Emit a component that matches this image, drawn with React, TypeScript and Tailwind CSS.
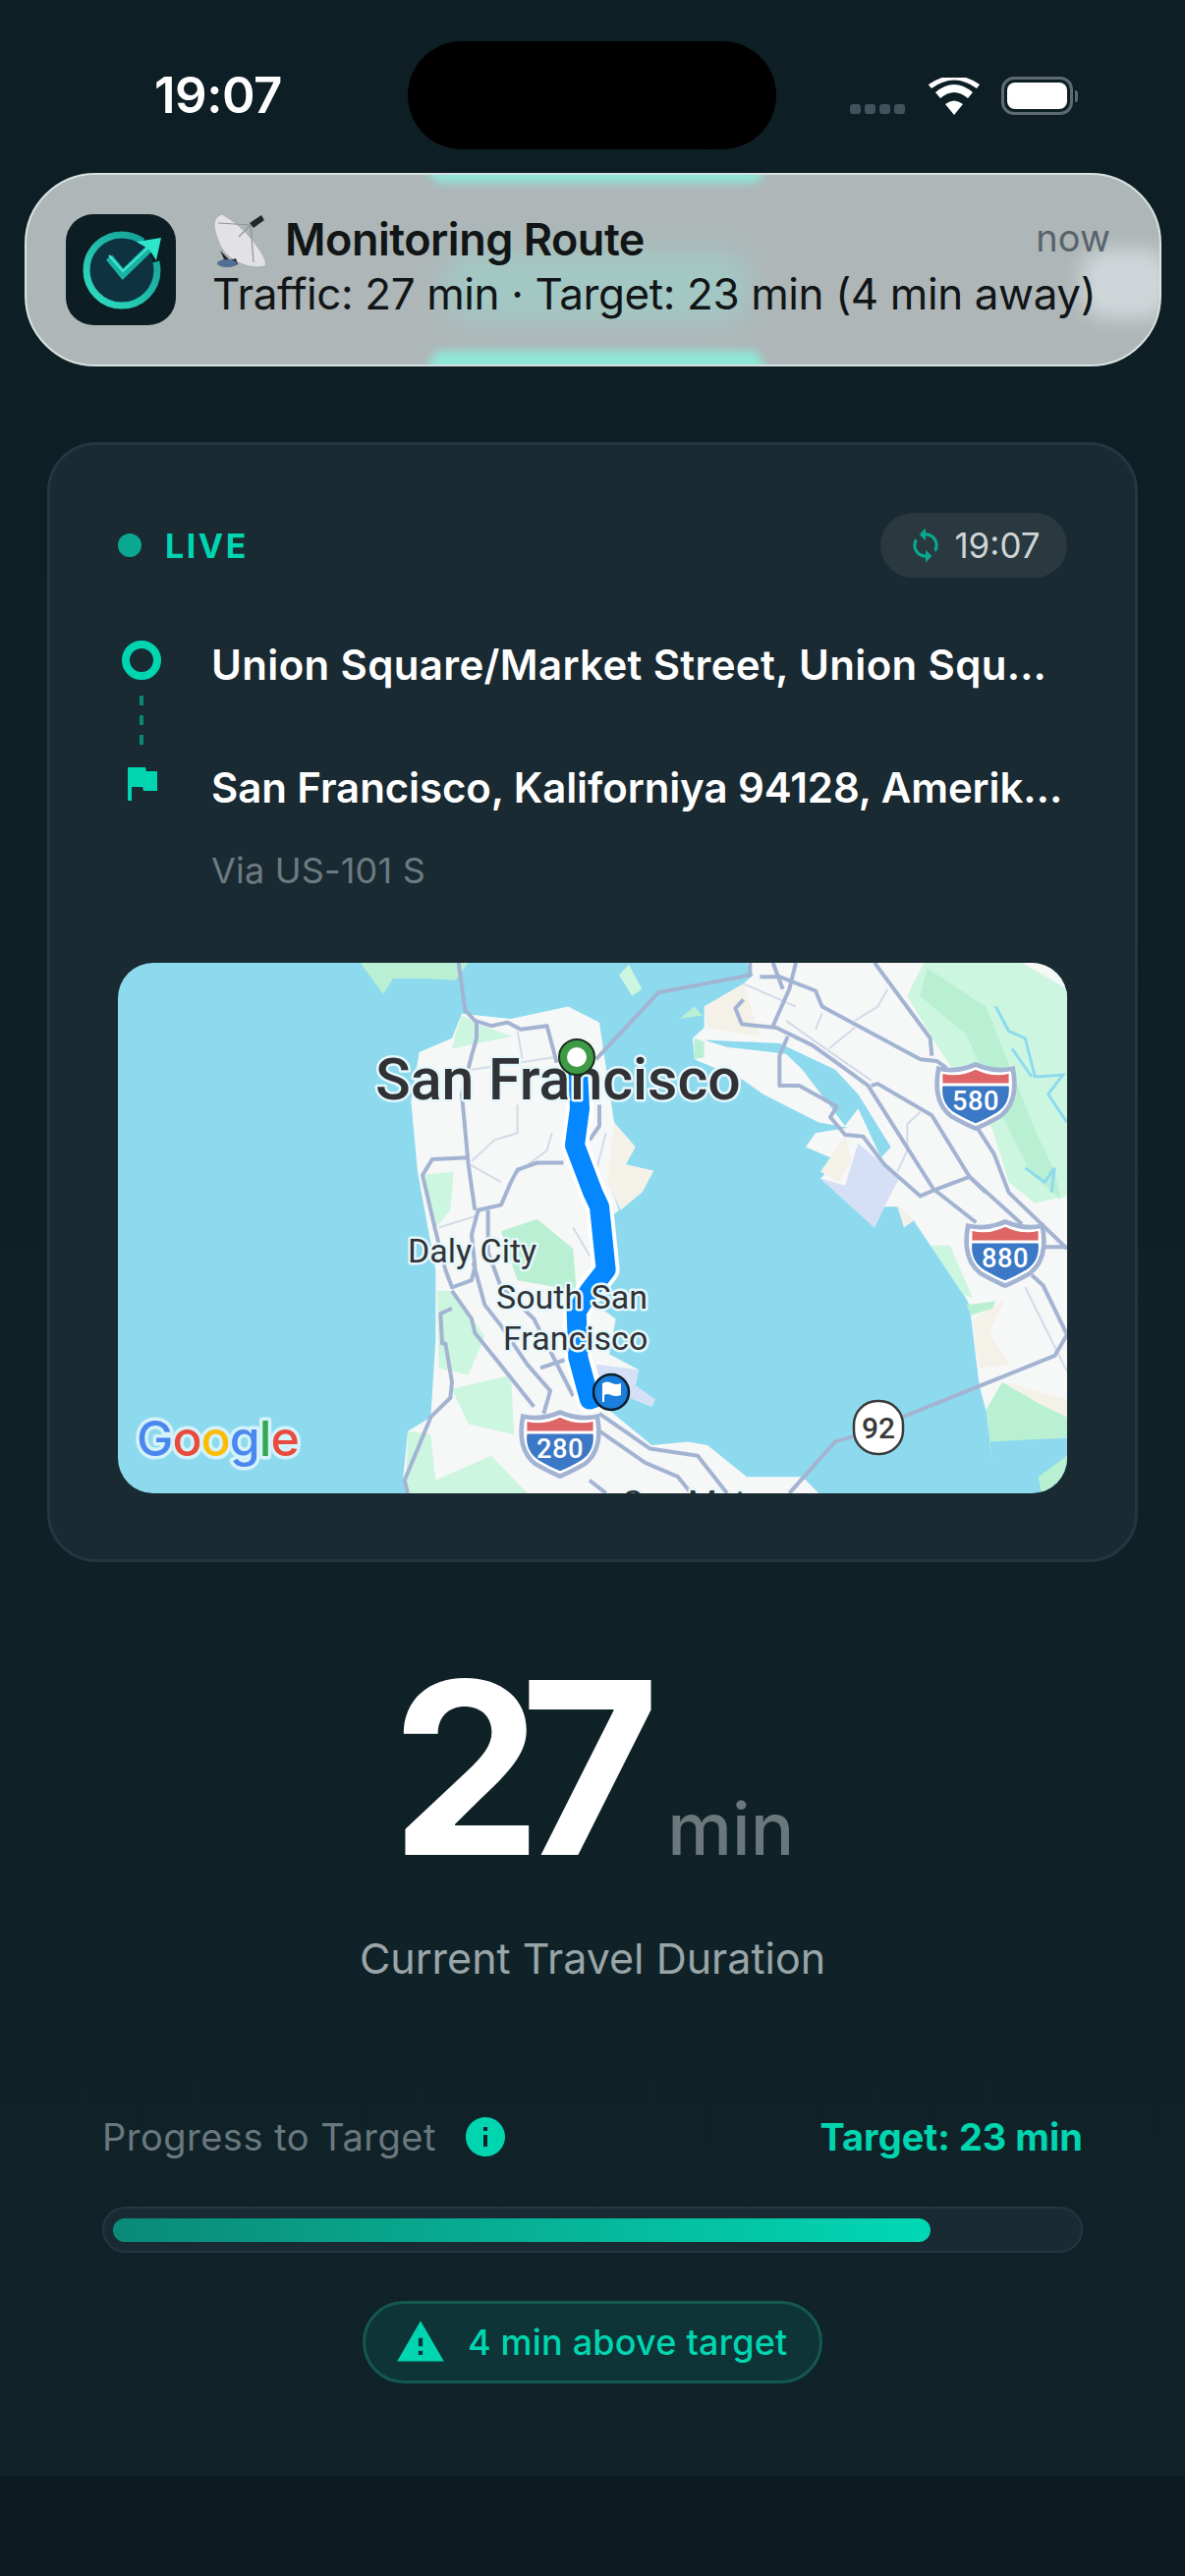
import React from 'react';
import { MdFlag, MdInfo, MdSync, MdWarning } from 'react-icons/md';

// map points are read off two crops of the map, left and right half
const L = (x: number, y: number) => `${110 + x / 3},${970 + y / 2.8}`;
const R = (x: number, y: number) => `${600 + x / 3},${970 + y / 2.8}`;
const left = (p: number[][]) => p.map(([x, y]) => L(x, y)).join(' ');
const right = (p: number[][]) => p.map(([x, y]) => R(x, y)).join(' ');

const WATER = '#8ddaee';
const LAND = '#f6f7f7';
const GREEN = '#b9f0d3';
const PALE = '#cdf6e0';
const TAN = '#f4f1e8';
const LAVENDER = '#d5dff5';
const ROAD = '#a3b4d3';
const MINOR = '#d3dbe8';

const westLand =
  left([[1080, 170], [1230, 185], [1405, 150], [1500, 195]]) + ' ' +
  right([[75, 480], [140, 550], [110, 600], [195, 618], [160, 680], [60, 650], [90, 730], [50, 760], [75, 900], [20, 1000], [80, 1040], [60, 1140], [150, 1185], [140, 1230], [200, 1270], [190, 1290], [110, 1260], [60, 1300], [190, 1400], [300, 1390], [360, 1400], [480, 1490], [650, 1490], [700, 1537]]) + ' ' +
  left([[910, 1537], [900, 1500], [915, 1360], [985, 1320], [1000, 1100], [1000, 900], [945, 620], [925, 420], [950, 280], [1050, 240]]);

const eastLand = right([[480, 25], [1458, 25], [1458, 1330], [1210, 1300], [1190, 1230], [1160, 1000], [1100, 900], [1040, 830], [990, 760], [940, 720], [900, 720], [870, 780], [705, 640], [760, 590], [660, 550], [690, 510], [790, 495], [700, 480], [530, 400], [470, 360], [320, 300], [315, 240], [350, 210], [350, 150], [470, 85], [500, 60]]);

const greens: [string, string][] = [
  [GREEN, left([[770, 25], [1100, 25], [1060, 75], [970, 70], [870, 70], [840, 115]])],
  [PALE, right([[90, 60], [120, 30], [160, 100], [130, 120]])],
  [PALE, left([[1080, 175], [1130, 200], [1235, 235], [1050, 270], [1060, 230]])],
  [PALE, left([[960, 630], [1055, 620], [1045, 730], [1000, 780]])],
  [GREEN, left([[1200, 790], [1310, 755], [1420, 840], [1430, 960], [1250, 930]])],
  [PALE, left([[1005, 960], [1050, 960], [1150, 1090], [1100, 1200], [1010, 1180]])],
  [PALE, left([[1050, 1240], [1230, 1200], [1240, 1370], [1100, 1340]])],
  [PALE, left([[915, 1360], [985, 1370], [1000, 1500], [1170, 1430], [1280, 1537], [910, 1537]])],
  [PALE, right([[1020, 25], [1320, 25], [1458, 100], [1458, 690], [1360, 710], [1280, 650], [1230, 500], [1060, 260], [970, 120]])],
  [GREEN, right([[1030, 40], [1210, 150], [1360, 500], [1420, 620], [1440, 700], [1350, 630], [1280, 500], [1150, 230], [1010, 120]])],
  [GREEN, right([[1150, 1000], [1240, 990], [1230, 1010], [1165, 1030]])],
  [PALE, right([[1040, 830], [1100, 830], [1170, 980], [1140, 970]])],
  [GREEN, right([[1210, 1300], [1260, 1220], [1370, 1280], [1458, 1320], [1458, 1380], [1320, 1385], [1220, 1390], [1230, 1450]])],
  [GREEN, right([[1370, 1490], [1458, 1430], [1458, 1537], [1380, 1537]])],
  [GREEN, right([[320, 240], [350, 250], [350, 295], [320, 300]])],
  [GREEN, right([[275, 185], [320, 150], [345, 175]])],
];

const tans: string[] = [
  right([[350, 150], [470, 85], [520, 235], [360, 210]]),
  right([[1170, 1040], [1270, 985], [1220, 1075], [1280, 1170], [1190, 1180]]),
  right([[1270, 1220], [1458, 1270], [1458, 1330], [1330, 1280]]),
  right([[75, 480], [140, 550], [110, 600], [195, 618], [160, 680], [95, 730], [55, 650]]),
  right([[780, 520], [800, 590], [760, 650], [705, 620]]),
  right([[940, 720], [990, 760], [960, 780]]),
];

const roads: string[] = [
  left([[1070, 25], [1090, 160], [1120, 190], [1170, 205], [1220, 195], [1260, 215], [1340, 205], [1370, 310]]),
  left([[1125, 195], [1125, 240], [1110, 290], [1080, 400], [1100, 600], [1120, 730]]),
  left([[1100, 580], [990, 585], [960, 630], [1000, 790], [1030, 900], [1050, 950], [1110, 930], [1120, 890], [1110, 800], [1130, 730], [1200, 715], [1230, 650], [1250, 615], [1310, 595], [1390, 595]]),
  left([[1160, 730], [1160, 850], [1200, 950], [1300, 1040], [1420, 1260]]),
  left([[1115, 880], [1150, 1000], [1200, 1060], [1280, 1170], [1350, 1245], [1330, 1310]]),
  left([[1050, 960], [1110, 1040], [1120, 1080], [1300, 1290]]),
  left([[1050, 1010], [1015, 1025], [1020, 1110], [1030, 1110], [1050, 1220], [1045, 1265], [985, 1320], [950, 1400], [905, 1500], [915, 1537]]),
  left([[1320, 1180], [1400, 1155]]),
  right([[20, 300], [210, 110], [490, 60], [490, 25]]),
  right([[520, 65], [580, 65], [690, 105], [710, 150], [1010, 300], [1060, 305], [1090, 325]]),
  right([[630, 25], [610, 100], [560, 205]]),
  right([[560, 25], [590, 100]]),
  right([[470, 130], [445, 155], [465, 200], [570, 210], [680, 260], [770, 320], [850, 375], [1050, 670], [1180, 765]]),
  right([[605, 235], [580, 290], [580, 375], [640, 375], [755, 435], [735, 465], [780, 515], [835, 520], [900, 600], [1010, 690], [1060, 670], [1160, 635], [1320, 770]]),
  right([[870, 25], [1040, 240], [1045, 290]]),
  right([[860, 375], [880, 370], [1045, 460], [1160, 635], [1210, 680]]),
  right([[1180, 490], [1235, 570], [1280, 680], [1458, 840]]),
  right([[1390, 835], [1458, 835]]),
  right([[1350, 915], [1385, 945], [1458, 1085], [1420, 1145], [955, 1320]]),
  right([[805, 1375], [750, 1390], [610, 1537]]),
  right([[30, 1310], [185, 1410], [330, 1430], [420, 1537]]),
  right([[0, 1340], [170, 1450], [270, 1490], [310, 1537]]),
  right([[0, 1500], [50, 1537]]),
  right([[30, 430], [30, 490], [0, 530]]),
];

const minorRoads: string[] = [
  left([[1250, 220], [1265, 300]]),
  left([[1110, 330], [1360, 295]]),
  left([[1250, 430], [1250, 510], [1180, 530], [1110, 590]]),
  left([[1355, 510], [1340, 560], [1240, 630]]),
  left([[1105, 600], [1200, 650]]),
  left([[1010, 780], [1130, 745]]),
  left([[1420, 780], [1470, 860]]),
  right([[470, 85], [630, 150]]),
  right([[600, 190], [720, 270], [860, 360]]),
  right([[710, 170], [690, 215]]),
  right([[810, 190], [880, 150], [910, 100]]),
  right([[810, 210], [730, 270]]),
  right([[1010, 450], [970, 485], [970, 560], [940, 620]]),
  right([[1330, 950], [1458, 1190]]),
  right([[50, 510], [20, 620]]),
];

const streams: string[] = [
  right([[1240, 150], [1280, 220], [1330, 240], [1360, 350], [1445, 345], [1400, 400], [1458, 480]]),
  right([[1290, 270], [1350, 350]]),
  right([[1330, 610], [1390, 650], [1420, 610], [1410, 680]]),
];

const route =
  L(1432, 293) + ' ' + L(1440, 440) + ' ' + L(1425, 545) + ' ' + L(1480, 680) + ' ' +
  R(30, 720) + ' ' + R(50, 900) + ' ' + L(1470, 960) + ' ' + L(1430, 1020) + ' ' + L(1435, 1150) + ' ' + L(1470, 1270) + ' ' + R(65, 1248);

function Shield({ x, y, label }: { x: number; y: number; label: string }) {
  return (
    <g transform={`translate(${x} ${y}) scale(1.05)`}>
      <path d="M-36 -26 Q-18 -22 0 -30 Q18 -22 36 -26 Q42 6 24 20 Q10 28 0 32 Q-10 28 -24 20 Q-42 6 -36 -26Z" fill="#fff" stroke={ROAD} strokeWidth="4.500" />
      <path d="M-32 -21 Q-16 -17 0 -25 Q16 -17 32 -21 L32 -12 L-32 -12Z" fill="#de6666" />
      <path d="M-32 -9 L32 -9 Q34 8 20 17 Q8 24 0 27 Q-8 24 -20 17 Q-34 8 -32 -9Z" fill="#3b78c6" />
      <text x="0" y="14" textAnchor="middle" fontSize="26" fontWeight="500" fill="#fff" letterSpacing="0.5">{label}</text>
    </g>
  );
}

function MapLabel({ x, y, size, weight, children }: { x: number; y: number; size: number; weight: number; children: React.ReactNode }) {
  return (
    <text x={x} y={y} fontSize={size} fontWeight={weight} fill="#303236" stroke="#e6f7fb" strokeWidth="5" strokeLinejoin="round" paintOrder="stroke">
      {children}
    </text>
  );
}

function RouteMap() {
  return (
    <svg viewBox="120 979 966 540" className="block h-full w-full font-['Roboto',sans-serif]">
      <rect x="120" y="979" width="966" height="540" fill={WATER} />
      <polygon points={westLand} fill={LAND} />
      <polygon points={eastLand} fill={LAND} />
      {tans.map((p, i) => <polygon key={i} points={p} fill={TAN} />)}
      {greens.map(([c, p], i) => <polygon key={i} points={p} fill={c} />)}
      <polygon points={right([[350, 245], [580, 255], [750, 330], [820, 400], [920, 550], [890, 580], [820, 440], [780, 490], [650, 330], [600, 285], [420, 265]])} fill={WATER} />
      <polygon points={right([[820, 540], [945, 640], [900, 720], [870, 780], [705, 640], [780, 660]])} fill={LAVENDER} />
      <polygon points={right([[20, 1170], [150, 1185], [140, 1230], [200, 1270], [190, 1290], [110, 1260], [40, 1250]])} fill={LAVENDER} />
      {streams.map((p, i) => <polyline key={i} points={p} fill="none" stroke={WATER} strokeWidth="3" />)}
      {minorRoads.map((p, i) => <polyline key={i} points={p} fill="none" stroke={MINOR} strokeWidth="2" />)}
      {roads.map((p, i) => <polyline key={i} points={p} fill="none" stroke={ROAD} strokeWidth="4" strokeLinejoin="round" />)}

      <polyline points={route} fill="none" stroke="#fff" strokeWidth="28" strokeLinejoin="round" />
      <polyline points={route} fill="none" stroke="#0487ff" strokeWidth="20" strokeLinejoin="round" />

      <MapLabel x={382} y={1118} size={59} weight={500}>San Francisco</MapLabel>
      <MapLabel x={415} y={1284} size={34} weight={400}>Daly City</MapLabel>
      <MapLabel x={505} y={1331} size={34} weight={400}>South San</MapLabel>
      <MapLabel x={512} y={1373} size={34} weight={400}>Francisco</MapLabel>
      <MapLabel x={634} y={1540} size={34} weight={400}>San Mateo</MapLabel>

      <Shield x={570} y={1468} label="280" />
      <Shield x={993} y={1114} label="580" />
      <Shield x={1023} y={1274} label="880" />

      <rect x="869" y="1425" width="50" height="54" rx="24" fill="#fff" stroke="#3a3a3a" strokeWidth="2.5" />
      <text x="894" y="1463" textAnchor="middle" fontSize="30" fontWeight="500" fill="#3a3a3a">92</text>

      <circle cx="587" cy="1075" r="18" fill="#3f9a45" stroke="#16301c" strokeWidth="2" />
      <circle cx="587" cy="1075" r="10" fill="#fff" />
      <circle cx="622" cy="1416" r="18" fill="#1a7fdc" stroke="#0c1d2c" strokeWidth="2.5" />
      <path d="M613 1407 Q618 1404 623 1407 Q627 1409 632 1407 L632 1419 Q627 1421 622 1419 Q618 1417 615 1419 L615 1426 L613 1426Z" fill="#fff" />

      <text x="139" y="1481" fontFamily="Inter, sans-serif" fontSize="50" fontWeight="500" stroke="#d4f2fa" strokeWidth="7" strokeLinejoin="round" paintOrder="stroke" letterSpacing="-1">
        <tspan fill="#4a87ee">G</tspan>
        <tspan fill="#e94b3c">o</tspan>
        <tspan fill="#fbbc05">o</tspan>
        <tspan fill="#4a87ee">g</tspan>
        <tspan fill="#34a853">l</tspan>
        <tspan fill="#e94b3c">e</tspan>
      </text>
    </svg>
  );
}

function AppIcon() {
  return (
    <svg viewBox="0 0 112 113" className="block h-[113px] w-[112px] shrink-0">
      <defs>
        <linearGradient id="ring" x1="0" y1="1" x2="1" y2="0">
          <stop offset="0" stopColor="#2fe0c4" />
          <stop offset="1" stopColor="#129a91" />
        </linearGradient>
      </defs>
      <rect width="112" height="113" rx="28" fill="#0c1d23" />
      <circle cx="57" cy="57" r="33" fill="#0f3240" />
      <circle cx="57" cy="57" r="36" fill="none" stroke="url(#ring)" strokeWidth="7" strokeDasharray="201 25" strokeDashoffset="-217" />
      <path d="M44 44 L58 61 L90 30" fill="none" stroke="#17b3a4" strokeWidth="8" />
      <path d="M44 42 L58 58 L88 30" fill="none" stroke="#43e6d1" strokeWidth="2" />
      <path d="M72 28 L97 24 L92 47 L85 36Z" fill="#2ee6cc" />
    </svg>
  );
}

function SatelliteDish() {
  return (
    <svg viewBox="0 0 56 56" className="block h-[56px] w-[56px] shrink-0">
      <path d="M10 1 Q1 4 2 14 Q6 36 18 45 Q36 58 54 54 Q56 50 50 40 Q34 14 10 1Z" fill="#e2e2e4" stroke="#a9adb0" strokeWidth="1" />
      <path d="M6 10 L39 12 M39 12 L42 50 M39 12 L27 24" stroke="#8f9599" strokeWidth="1.2" fill="none" />
      <path d="M38 10 L50 2 L53 7 L42 15Z" fill="#25282b" />
      <path d="M8 38 L18 48 L24 46 L26 52 Q15 57 6 52 L12 47Z" fill="#26292c" />
      <ellipse cx="15" cy="51" rx="10" ry="4" fill="#4f6f94" />
    </svg>
  );
}

function Wifi() {
  return (
    <svg viewBox="0 0 52 38" className="block h-[38px] w-[52px]">
      <path d="M26 38 L17 27 Q26 20 35 27Z M12 21 L7 15 Q26 -1 45 15 L40 21 Q26 9 12 21Z M3 11 L0 7.500 Q0 7.500 0 7 Q26 -11 52 7 L49 11 Q26 -6 3 11Z" fill="#fff" />
    </svg>
  );
}

export default function App() {
  return (
    <div className="h-[2622px] w-[1206px] overflow-hidden bg-[#0c1b20] font-['Inter',sans-serif] text-white">
      <main className="h-[2520px] bg-gradient-to-b from-[#0d1e24] to-[#102329]">
        <div className="flex h-[176px] items-start">
          <div className="w-[415px] pl-[157px] pt-[71px] text-[51px] leading-[52px] font-semibold tracking-[-0.5px]">19:07</div>
          <div className="mt-[42px] h-[110px] w-[375px] rounded-[55px] bg-black" />
          <div className="flex items-center pl-[75px] pt-[78px]">
            <div className="flex gap-[4px] self-end pb-[1px]">
              <span className="h-[10px] w-[11px] rounded-[3px] bg-[#40525a]" />
              <span className="h-[10px] w-[11px] rounded-[3px] bg-[#40525a]" />
              <span className="h-[10px] w-[11px] rounded-[3px] bg-[#40525a]" />
              <span className="h-[10px] w-[11px] rounded-[3px] bg-[#40525a]" />
            </div>
            <div className="ml-[24px]"><Wifi /></div>
            <div className="ml-[22px] flex items-center">
              <div className="h-[39px] w-[73px] rounded-[13px] border-[3px] border-[#5d6a70] p-[3px]">
                <div className="h-full w-full rounded-[8px] bg-white" />
              </div>
              <div className="ml-[2px] h-[12px] w-[3px] rounded-r-full bg-[#5d6a70]" />
            </div>
          </div>
        </div>

        <section className="relative mx-[25px] h-[197px] w-[1157px] overflow-hidden rounded-[72px] border-2 border-[#d9e1e2] bg-[#aeb6b8]">
          <div className="absolute left-[410px] top-[-18px] h-[26px] w-[340px] rounded-full bg-[#8fe8d8] blur-[5px]" />
          <div className="absolute left-[425px] top-[76px] h-[76px] w-[310px] rounded-[30px] bg-[#8fe8d8] opacity-35 blur-[14px]" />
          <div className="absolute left-[410px] bottom-[-16px] h-[30px] w-[340px] rounded-full bg-[#8fe8d8] blur-[5px]" />
          <div className="absolute right-[-10px] top-[76px] h-[70px] w-[90px] rounded-[24px] bg-[#d7dfe2] opacity-80 blur-[10px]" />
          <div className="relative flex h-full items-center pl-[40px]">
            <AppIcon />
            <div className="ml-[37px] mt-[-7px] flex-1 text-[#111516]">
              <div className="flex items-start">
                <SatelliteDish />
                <span className="ml-[18px] text-[45px] leading-[54px] font-semibold tracking-[-0.5px]">Monitoring Route</span>
              </div>
              <div className="whitespace-nowrap text-[44px] leading-[52px] tracking-[-0.4px]">Traffic: 27 min · Target: 23 min (4 min away)</div>
            </div>
          </div>
          <div className="absolute right-[50px] top-[40px] text-[38px] leading-[48px] text-[#58646a]">now</div>
        </section>

        <section className="mx-[48px] mt-[77px] h-[1140px] w-[1110px] rounded-[50px] border-[3px] border-[#243740] bg-[#192a32] px-[69px] pt-[69px]">
          <div className="flex h-[66px] items-center justify-between">
            <div className="flex items-center">
              <span className="h-[24px] w-[24px] rounded-full bg-[#0aa890]" />
              <span className="ml-[24px] text-[34px] font-bold tracking-[2.5px] text-[#00d5b0]">LIVE</span>
            </div>
            <div className="flex h-[66px] w-[190px] items-center justify-center gap-[10px] rounded-full bg-[#29393f]">
              <MdSync className="h-[38px] w-[38px] text-[#0aa890]" />
              <span className="text-[35px] text-[#cfd4d6]">19:07</span>
            </div>
          </div>

          <div className="mt-[64px] flex">
            <div className="flex w-[47px] flex-col items-center">
              <span className="h-[40px] w-[40px] rounded-full border-[8px] border-[#00d5b0]" />
              <div className="mt-[16px] flex flex-col gap-[10px]">
                <span className="h-[10px] w-[4px] bg-[#0b8775]" />
                <span className="h-[10px] w-[4px] bg-[#0b8775]" />
                <span className="h-[10px] w-[4px] bg-[#0b8775]" />
              </div>
              <MdFlag className="mt-[15px] h-[48px] w-[48px] text-[#00d5b0]" />
            </div>
            <div className="ml-[48px]">
              <div className="whitespace-nowrap text-[42px] leading-[50px] font-semibold tracking-[0.35px]">Union Square/Market Street, Union Squ…</div>
              <div className="mt-[75px] whitespace-nowrap text-[42px] leading-[50px] font-semibold tracking-[-0.1px]">San Francisco, Kaliforniya 94128, Amerik…</div>
              <div className="mt-[37px] text-[36px] leading-[44px] tracking-[0.2px] text-[#6c7b80]">Via US-101 S</div>
            </div>
          </div>

          <div className="mt-[72px] h-[540px] w-[966px] overflow-hidden rounded-[36px]">
            <RouteMap />
          </div>
        </section>

        <div className="mt-[80px] flex items-baseline justify-center">
          <span className="text-[244px] leading-[260px] font-bold tracking-[-22px]">27</span>
          <span className="ml-[30px] text-[74px] font-medium text-[#6a787c]">min</span>
        </div>
        <div className="mt-[35px] text-center text-[43px] leading-[56px] text-[#9aa5a8]">Current Travel Duration</div>

        <div className="mt-[130px] px-[104px]">
          <div className="flex items-center justify-between">
            <div className="flex items-center">
              <span className="text-[38px] leading-[48px] tracking-[0.5px] text-[#6b787d]">Progress to Target</span>
              <MdInfo className="ml-[26px] h-[48px] w-[48px] text-[#00d5b0]" />
            </div>
            <span className="text-[38px] leading-[48px] font-bold text-[#00d5b0]">Target: 23 min</span>
          </div>
          <div className="mt-[47px] h-[47px] rounded-full border-2 border-[#263640] bg-[#1a2a33] px-[9px] py-[10px]">
            <div className="h-[24px] w-[832px] rounded-full bg-gradient-to-r from-[#0a8a78] to-[#00d8b4]" />
          </div>
          <div className="mt-[49px] flex justify-center">
            <div className="flex h-[84px] w-[468px] items-center rounded-full border-[3px] border-[#14584f] bg-[#0e3437] pl-[30px]">
              <MdWarning className="h-[52px] w-[52px] text-[#00d5b0]" />
              <span className="ml-[22px] text-[36px] font-medium tracking-[0.2px] text-[#00d5b0]">4 min above target</span>
            </div>
          </div>
        </div>
      </main>
    </div>
  );
}
